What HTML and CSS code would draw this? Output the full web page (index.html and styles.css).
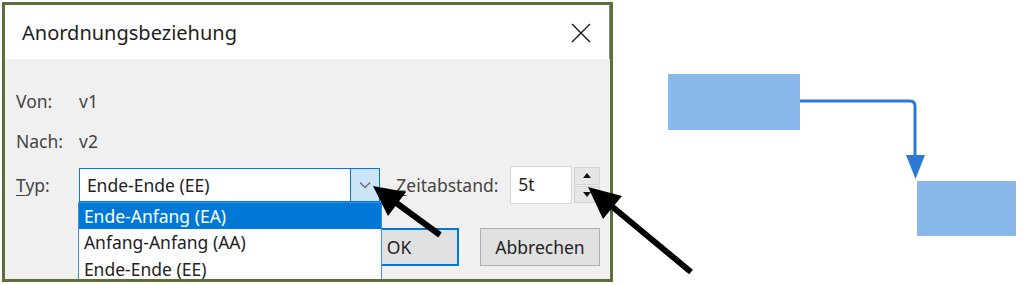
FILE: index.html
```html
<!DOCTYPE html>
<html lang="de">
<head>
    <meta charset="UTF-8">
    <title>Anordnungsbeziehung</title>
    <link rel="stylesheet" href="styles.css">
</head>
<body>
    <div class="dialog">
        <div class="titlebar">
            <span class="title">Anordnungsbeziehung</span>
            <svg class="close" width="20" height="20" viewBox="0 0 20 20">
                <path d="M1 1 L19 19 M19 1 L1 19" stroke="#1a1a1a" stroke-width="1.4" fill="none"/>
            </svg>
        </div>
        <div class="content">
            <div class="row">
                <span class="label">Von:</span>
                <span class="value">v1</span>
            </div>
            <div class="row">
                <span class="label">Nach:</span>
                <span class="value">v2</span>
            </div>
            <div class="row row-typ">
                <span class="label"><u>T</u>yp:</span>
                <div class="combo">
                    <span class="combo-text">Ende-Ende (EE)</span>
                    <span class="combo-btn">
                        <svg width="12" height="8" viewBox="0 0 12 8">
                            <path d="M1 1.5 L6 6.5 L11 1.5" stroke="#6b6b6b" stroke-width="1.3" fill="none"/>
                        </svg>
                    </span>
                    <ul class="combo-list">
                        <li class="selected">Ende-Anfang (EA)</li>
                        <li>Anfang-Anfang (AA)</li>
                        <li>Ende-Ende (EE)</li>
                    </ul>
                </div>
                <span class="label-zeit"><u>Z</u>eitabstand:</span>
                <div class="spin-input">5t</div>
                <div class="spin">
                    <span class="spin-btn">
                        <svg width="8" height="5" viewBox="0 0 8 5"><path d="M0 5 L4 0 L8 5 Z" fill="#111"/></svg>
                    </span>
                    <span class="spin-btn">
                        <svg width="8" height="5" viewBox="0 0 8 5"><path d="M0 0 L4 5 L8 0 Z" fill="#111"/></svg>
                    </span>
                </div>
            </div>
            <div class="buttons">
                <button type="button" class="btn btn-default">OK</button>
                <button type="button" class="btn">Abbrechen</button>
            </div>
        </div>
    </div>

    <svg class="diagram" width="409" height="284" viewBox="615 0 409 284">
        <rect x="668" y="74" width="132" height="56" fill="#89b9eb"/>
        <path d="M800 101 L910 101 Q915 101 915 106 L915 160" stroke="#2a7ad4" stroke-width="3" fill="none"/>
        <path d="M906 155 L925 155 L915.5 179 Z" fill="#2a7ad4"/>
        <rect x="917" y="181" width="99" height="55" fill="#89b9eb"/>
    </svg>

    <svg class="pointers" width="1024" height="284" viewBox="0 0 1024 284">
        <line x1="440" y1="235" x2="395" y2="202" stroke="#000" stroke-width="6"/>
        <path d="M373 186 L406 192 L388 216 Z" fill="#000"/>
        <line x1="691" y1="272" x2="609" y2="204" stroke="#000" stroke-width="6"/>
        <path d="M588 187 L622 196 L603 219 Z" fill="#000"/>
    </svg>
</body>
</html>
```

FILE: styles.css
```css
body {
    margin: 0;
    padding: 0;
    background-color: #fff;
    font-family: 'Noto Sans', 'Open Sans', sans-serif;
    display: flex;
    align-items: flex-start;
    width: 1024px;
    height: 284px;
    overflow: hidden;
    position: relative;
}
.dialog {
    margin: 2px;
    width: 611px;
    height: 280px;
    box-sizing: border-box;
    border: 3px solid #5b7039;
    background-color: #f0f0f0;
    display: flex;
    flex-direction: column;
    overflow: hidden;
    flex-shrink: 0;
}
.titlebar {
    height: 54px;
    background-color: #fff;
    display: flex;
    align-items: center;
    justify-content: space-between;
    padding: 0 18px 0 17px;
    border-right: 1px solid #8c8c8c;
}
.title {
    font-size: 20px;
    color: #1e1e1e;
}
.close {
    margin-top: 2px;
}
.content {
    flex: 1;
    padding: 22px 10px 0 11px;
}
.row {
    display: flex;
    align-items: center;
    height: 40px;
    font-size: 17.5px;
    color: #444;
}
.label {
    width: 63px;
}
.label u,
.label-zeit u {
    text-decoration-thickness: 1px;
    text-underline-offset: 3px;
}
.row-typ {
    margin-top: 5px;
    height: 38px;
}
.combo {
    position: relative;
    width: 302px;
    height: 34px;
    box-sizing: border-box;
    border: 1px solid #0078d7;
    background-color: #fff;
    display: flex;
    align-items: center;
    justify-content: space-between;
}
.combo-text {
    padding-left: 7px;
    color: #222;
}
.combo-btn {
    width: 28px;
    height: 100%;
    background-color: #cce4f7;
    border-left: 1px solid #0078d7;
    display: flex;
    align-items: center;
    justify-content: center;
}
.combo-list {
    position: absolute;
    left: -2px;
    top: 33px;
    width: 302px;
    margin: 0;
    padding: 0;
    list-style: none;
    background-color: #fff;
    border: 1px solid #3f8ee0;
    z-index: 2;
}
.combo-list li {
    height: 27px;
    line-height: 27px;
    padding-left: 5px;
    color: #222;
}
.combo-list li.selected {
    background-color: #0078d7;
    color: #fff;
    height: 26px;
    line-height: 26px;
}
.label-zeit {
    margin-left: 16px;
    width: 114px;
}
.spin-input {
    width: 62px;
    height: 38px;
    box-sizing: border-box;
    border: 1px solid #d6d6d6;
    background-color: #fff;
    padding-left: 7px;
    line-height: 34px;
    color: #222;
}
.spin {
    margin-left: 2px;
    width: 26px;
    height: 36px;
    display: flex;
    flex-direction: column;
    gap: 1px;
}
.spin-btn {
    flex: 1;
    background-color: #e6e6e6;
    border: 1px solid #d2d2d2;
    display: flex;
    align-items: center;
    justify-content: center;
}
.buttons {
    display: flex;
    justify-content: flex-end;
    gap: 21px;
    margin-top: 24px;
}
.btn {
    width: 120px;
    height: 38px;
    box-sizing: border-box;
    border: 1px solid #adadad;
    background-color: #e1e1e1;
    font-family: inherit;
    font-size: 17.5px;
    color: #222;
    padding: 0;
}
.btn-default {
    border: 2px solid #0078d7;
}
.diagram {
    flex-shrink: 0;
}
.pointers {
    position: absolute;
    left: 0;
    top: 0;
    pointer-events: none;
    z-index: 5;
}
```
